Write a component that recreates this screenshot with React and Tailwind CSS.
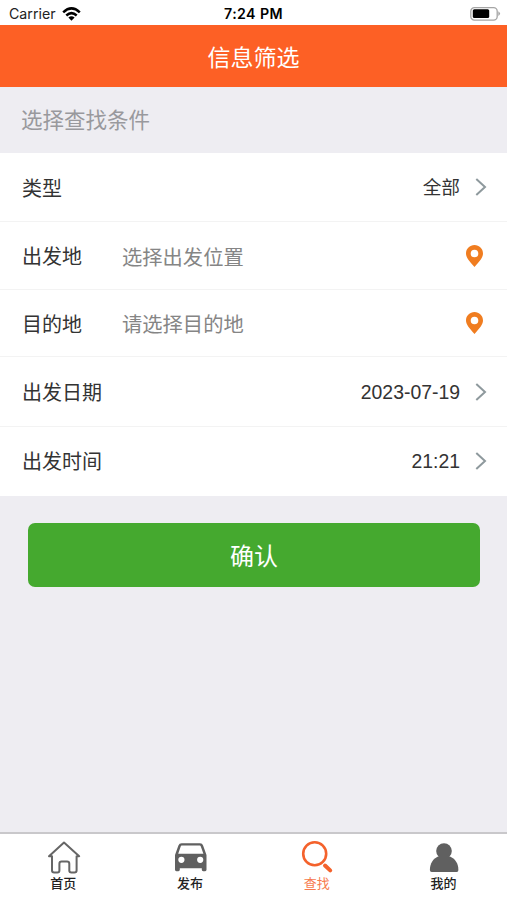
import React from "react";

const Chevron = () => (
  <svg className="ml-[15px] h-[18px] w-3 shrink-0" viewBox="0 0 12 18" fill="none" stroke="#8e999d" strokeWidth="2">
    <path d="M1.3 1L10 9L1.3 17" />
  </svg>
);

const Pin = () => (
  <svg className="mr-1 h-[22px] w-[17px] shrink-0" viewBox="0 0 17 22">
    <path
      fill="#f07d20"
      fillRule="evenodd"
      d="M8.5 0C3.8 0 0 3.7 0 8.4C0 12.6 3.5 16.2 8.5 22C13.5 16.2 17 12.6 17 8.4C17 3.7 13.2 0 8.5 0ZM8.5 4.7A3.8 3.8 0 1 1 8.5 12.3A3.8 3.8 0 1 1 8.5 4.7Z"
    />
  </svg>
);

const icons = {
  home: (
    <path
      d="M4 15.2L19 1.6L34.2 15.2H31.6V29.2Q31.6 31.4 29.4 31.4H26.4Q24.3 31.4 24.3 29.5V22.7Q24.3 20.4 22 20.4H16.6Q14.4 20.4 14.4 22.7V29.5Q14.4 31.4 12.4 31.4H9.2Q7 31.4 7 29.2V15.2Z"
      fill="none"
      stroke="#666"
      strokeWidth="2"
      strokeLinejoin="round"
    />
  ),
  car: (
    <path
      fill="#606060"
      fillRule="evenodd"
      d="M9.6 2.2H28Q30.4 2.2 31.1 4.5L34.5 14V28.8Q34.5 30.2 33.1 30.2H31.2Q29.8 30.2 29.8 28.8V27.2H7.8V28.8Q7.8 30.2 6.4 30.2H4.4Q3 30.2 3 28.8V14L6.4 4.5Q7.2 2.2 9.6 2.2ZM9.7 4.6Q9 4.6 8.7 5.4L6.2 12.7H31.4L28.8 5.4Q28.5 4.6 27.8 4.6ZM9.4 15.7A3.1 3.1 0 1 0 9.4 21.9A3.1 3.1 0 1 0 9.4 15.7ZM28.2 15.7A3.1 3.1 0 1 0 28.2 21.9A3.1 3.1 0 1 0 28.2 15.7Z"
    />
  ),
  search: (
    <g fill="none" stroke="#f4622c">
      <circle cx="15.7" cy="12.8" r="11.5" strokeWidth="2.6" />
      <path d="M26 24.5L31.2 29.4" strokeWidth="4" strokeLinecap="round" />
    </g>
  ),
  person: (
    <g fill="#606060">
      <circle cx="18" cy="10" r="7.8" />
      <path d="M12 15.6H24C28.8 17.8 32.4 22 32.4 29Q32.4 31 30.7 31H5.7Q3.9 31 3.9 29C3.9 22 7.4 17.8 12 15.6Z" />
    </g>
  ),
};

const tabs = [
  { icon: "home", label: "首页" },
  { icon: "car", label: "发布" },
  { icon: "search", label: "查找", active: true },
  { icon: "person", label: "我的" },
];

const rows = [
  { label: "类型", value: "全部", h: "h-[69px]", valueSize: "text-[18.7px]", pad: "pt-[3px]" },
  { label: "出发地", placeholder: "选择出发位置", h: "h-[68px]", pad: "pt-[3px]" },
  { label: "目的地", placeholder: "请选择目的地", h: "h-[67px]", pad: "pt-1" },
  { label: "出发日期", value: "2023-07-19", h: "h-[70px]", valueSize: "text-[19.4px]", pad: "pt-[2px]" },
  { label: "出发时间", value: "21:21", h: "h-[69px]", valueSize: "text-[19.4px]", pad: "pt-[2px]" },
];

export default function App() {
  return (
    <div className="flex h-[900px] w-[507px] flex-col overflow-hidden bg-[#eeedf2] font-['Liberation_Sans','Noto_Sans_CJK_SC',sans-serif]">
      <div className="flex h-[25px] shrink-0 items-center bg-white pr-[6px] pl-[9px] pt-[2px] font-['Inter',sans-serif] text-[14.2px] leading-[22px] text-[#222]">
        <div className="flex flex-1 items-center gap-[6px]">
          <span>Carrier</span>
          <svg className="h-[14px] w-[19px]" viewBox="0 0 19 14" fill="none" stroke="#000" strokeWidth="2.5">
            <path d="M1.2 5.3Q9.5 -2.5 17.8 5.3" />
            <path d="M4.3 8.5Q9.5 3.8 14.7 8.5" />
            <path d="M9.5 13.7L6.4 10.6Q9.5 8 12.6 10.6Z" fill="#000" stroke="none" />
          </svg>
        </div>
        <span className="mr-[3px] text-center font-semibold tracking-[0.4px] text-black">7:24 PM</span>
        <div className="flex flex-1 justify-end">
          <svg className="h-[14px] w-[31px]" viewBox="0 0 31 14">
            <rect x="0.8" y="0.7" width="26.4" height="12.4" rx="3.6" fill="none" stroke="#a5a5a5" strokeWidth="1.3" />
            <rect x="2.8" y="2.3" width="16.4" height="8.8" rx="1.5" fill="#000" />
            <path d="M28.3 4.2Q31.8 6.6 28.3 9Z" fill="#a5a5a5" />
          </svg>
        </div>
      </div>

      <header className="flex h-[62px] shrink-0 items-center justify-center bg-[#fd6025] pt-[5px] text-[23px] text-white">
        信息筛选
      </header>

      <div className="flex h-[66px] shrink-0 items-center pt-[2px] pl-[21px] text-[21.5px] text-[#99999d]">
        选择查找条件
      </div>

      <div className="shrink-0 bg-white">
        {rows.map((row, i) => (
          <div
            key={row.label}
            className={`flex items-center border-b pr-5 pl-[22px] text-[20px] text-[#333] ${i < 4 ? "border-[#f3f3f3]" : "border-white"} ${row.h}`}
          >
            <span className={`w-[100px] ${row.pad}`}>{row.label}</span>
            {row.placeholder ? (
              <>
                <span className="flex-1 pt-[5px] text-[20.3px] text-[#858585]">{row.placeholder}</span>
                <Pin />
              </>
            ) : (
              <>
                <span className={`flex-1 text-right ${row.pad} ${row.valueSize}`}>{row.value}</span>
                <Chevron />
              </>
            )}
          </div>
        ))}
      </div>

      <button className="mx-[27.5px] mt-[27px] h-[64px] shrink-0 rounded-[7px] bg-[#45a92f] pt-1 pl-px text-[24px] text-white">
        确认
      </button>

      <nav className="mt-auto grid h-[68px] shrink-0 grid-cols-4 border-t-2 border-[#c9c8cb] bg-white">
        {tabs.map((tab) => (
          <div key={tab.icon} className="flex flex-col items-center pt-[7px]">
            <svg className="h-[34px] w-9" viewBox="0 0 36 34">
              {icons[tab.icon]}
            </svg>
            <span
              className={`text-[13px] leading-[18px] ${tab.active ? "text-[#f7794d]" : "font-medium text-[#222]"}`}
            >
              {tab.label}
            </span>
          </div>
        ))}
      </nav>
    </div>
  );
}
